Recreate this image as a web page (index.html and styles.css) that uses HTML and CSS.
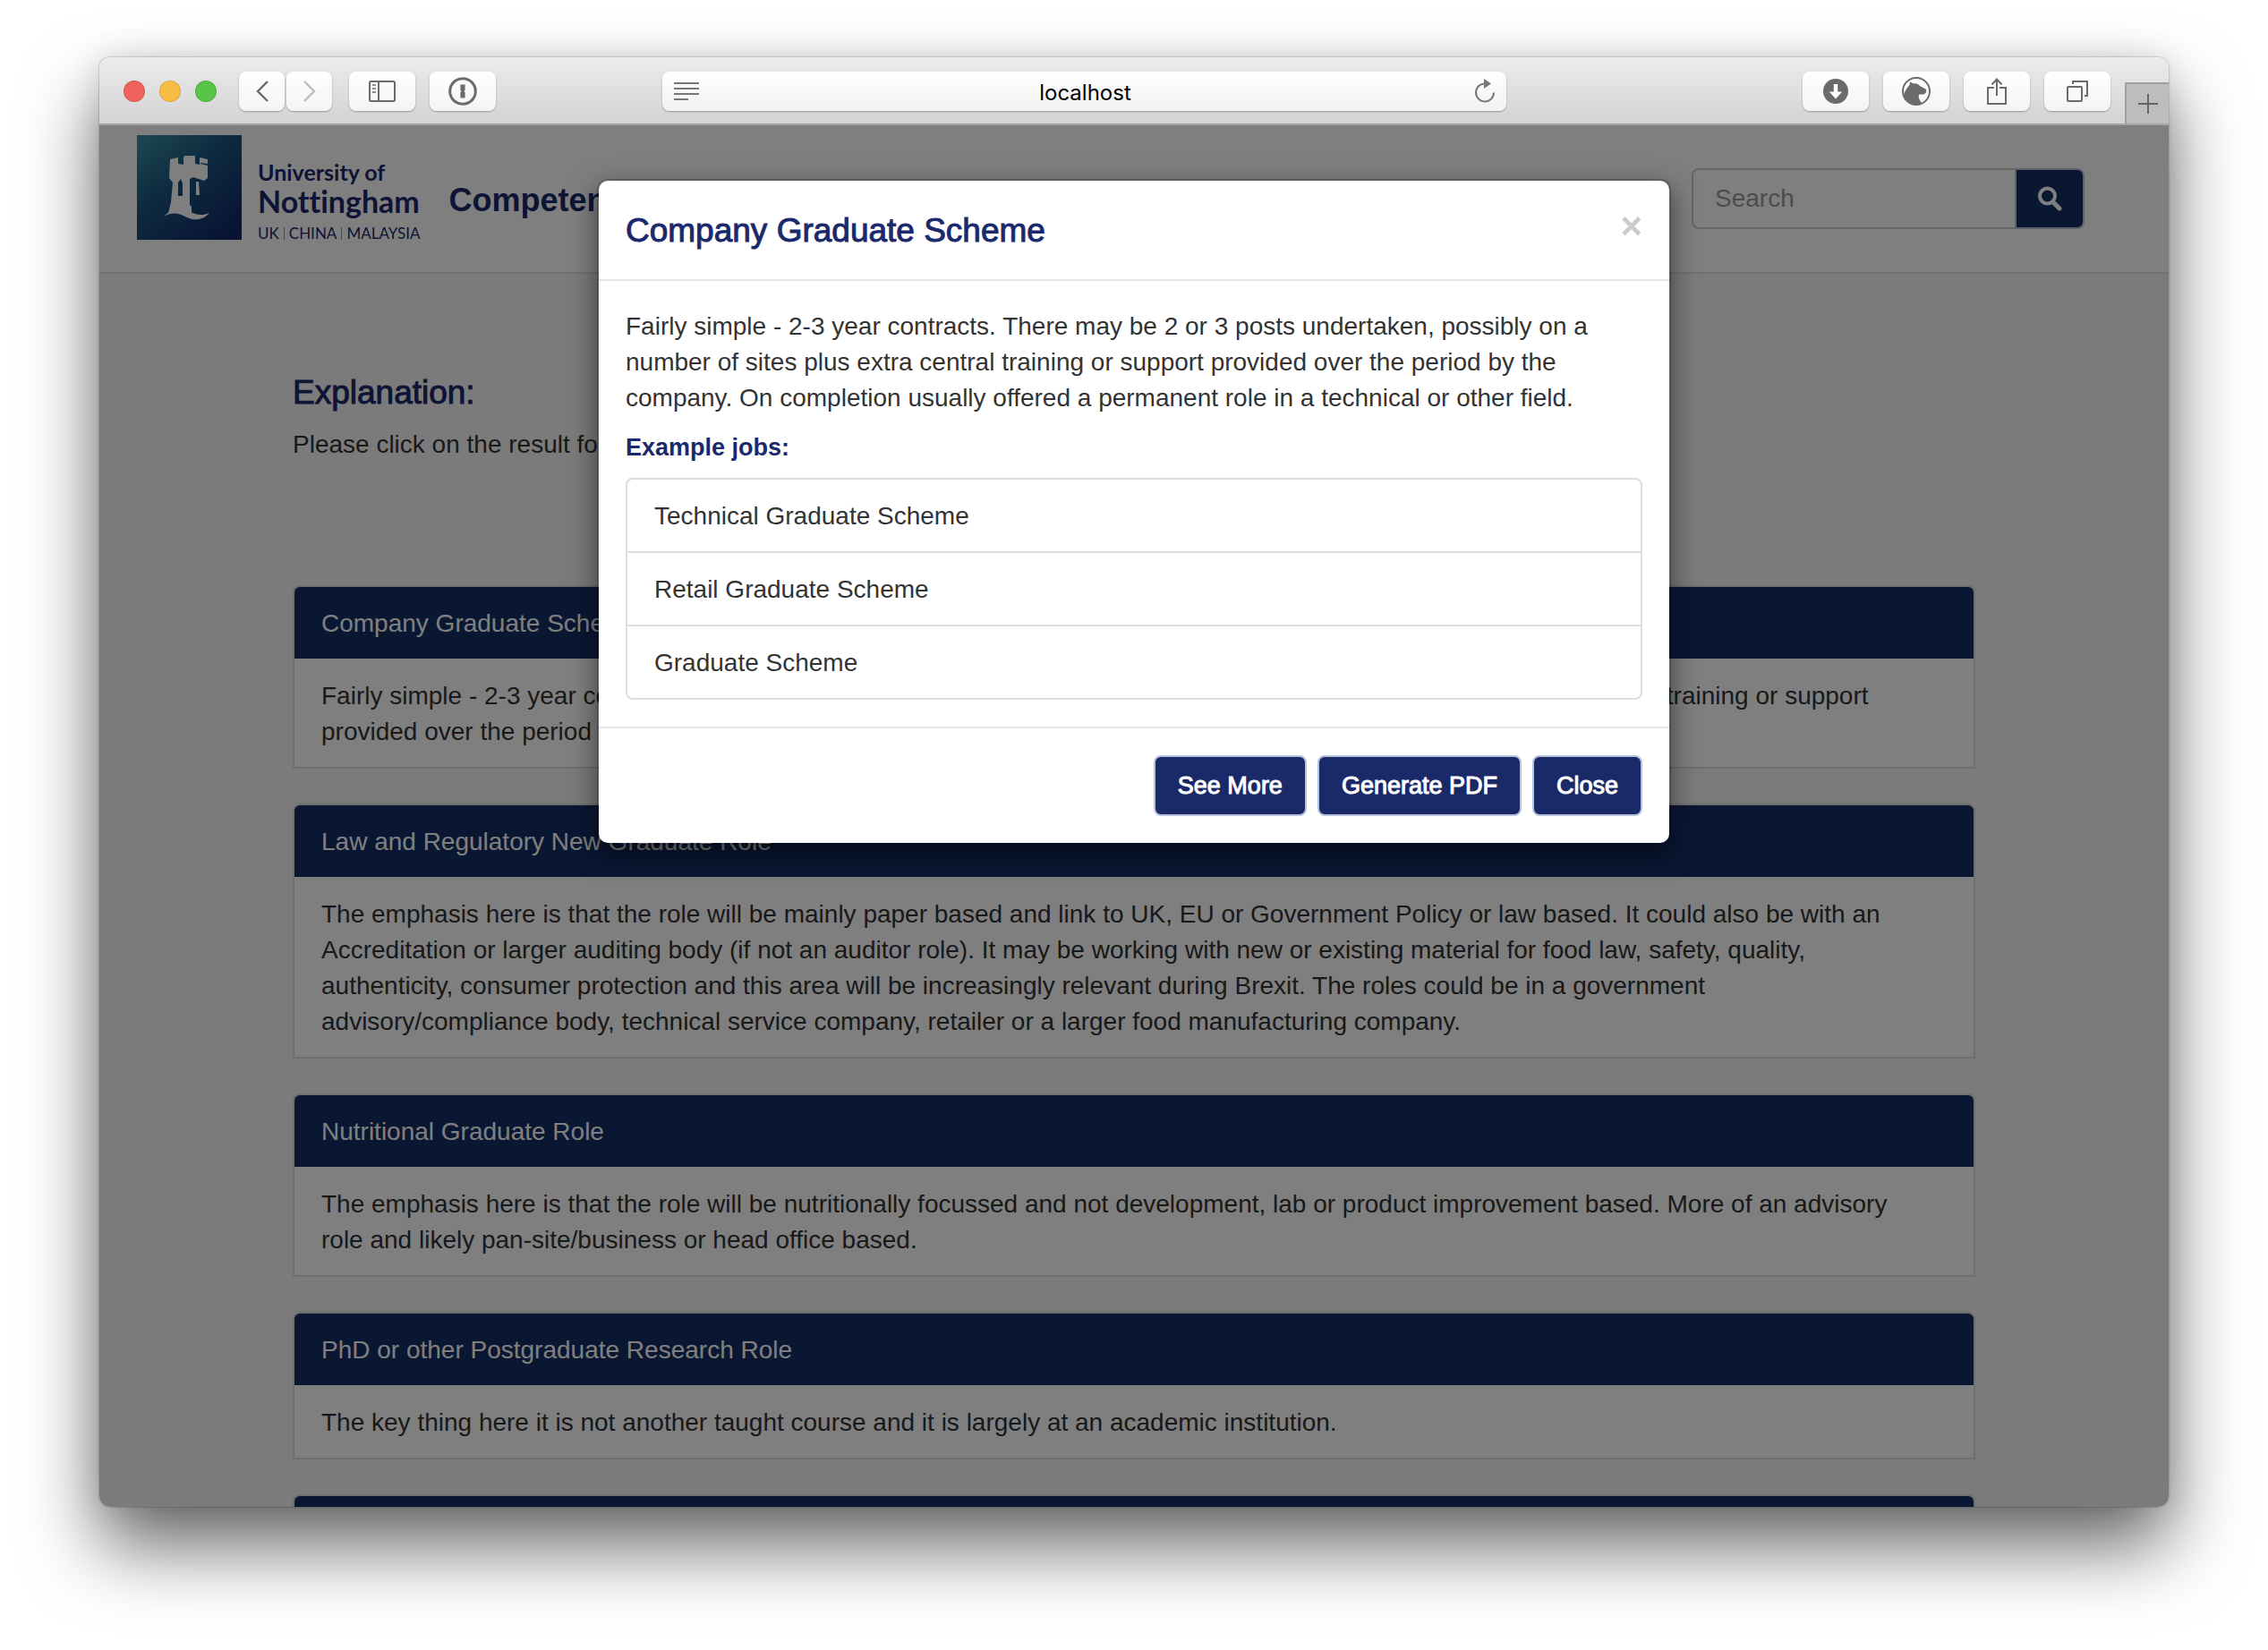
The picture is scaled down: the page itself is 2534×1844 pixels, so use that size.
FILE: index.html
```html
<!DOCTYPE html>
<html lang="en">
<head>
<meta charset="utf-8">
<title>localhost</title>
<link rel="stylesheet" href="styles.css">
</head>
<body>
<div class="window">
  <div class="toolbar">
    <div class="lights">
      <span class="light light-close"></span>
      <span class="light light-min"></span>
      <span class="light light-max"></span>
    </div>
    <div class="nav-pair">
      <button class="tool tool-narrow" aria-label="Back"><svg width="16" height="26" viewBox="0 0 16 26"><path d="M14 2 3 13l11 11" fill="none" stroke="#6b6b6b" stroke-width="2.4"/></svg></button>
      <button class="tool tool-narrow" aria-label="Forward"><svg width="16" height="26" viewBox="0 0 16 26"><path d="m2 2 11 11L2 24" fill="none" stroke="#bdbdbd" stroke-width="2.4"/></svg></button>
    </div>
    <div class="tool-group">
      <button class="tool" aria-label="Sidebar"><svg width="32" height="26" viewBox="0 0 32 26" fill="none" stroke="#6b6b6b"><rect x="2" y="2" width="28" height="22" rx="1.5" stroke-width="2"/><path d="M12 2v22" stroke-width="2"/><path d="M5 6h4M5 10h4M5 14h4" stroke-width="1.4"/></svg></button>
      <button class="tool" aria-label="Password manager"><svg width="32" height="32" viewBox="0 0 32 32"><circle cx="16" cy="16" r="14.3" fill="none" stroke="#6b6b6b" stroke-width="3"/><path d="M13.4 8.5h5.2v6.2l-1.2 1.3 1.2 1.2v6.3h-5.2v-6.2l1.2-1.3-1.2-1.2z" fill="#6b6b6b"/></svg></button>
    </div>
    <div class="address">
      <svg width="30" height="22" viewBox="0 0 30 22"><path d="M1 2h28M1 8h28M1 14h28M1 20h16" stroke="#777" stroke-width="2"/></svg>
      <input class="address-input" type="text" value="localhost" aria-label="Address">
      <button class="reload" aria-label="Reload"><svg width="24" height="28" viewBox="0 0 24 28"><path d="M13 5.5a10 10 0 1 0 9 10" fill="none" stroke="#777" stroke-width="2"/><path d="M11 0v11l8-5.5z" fill="#777"/></svg></button>
    </div>
    <div class="tool-group">
      <button class="tool" aria-label="Downloads"><svg width="28" height="28" viewBox="0 0 28 28"><circle cx="14" cy="14" r="14" fill="#6b6b6b"/><path d="M11.8 6h4.4v8.5h5L14 22.5l-7.2-8h5z" fill="#fff"/></svg></button>
      <button class="tool" aria-label="Extension"><svg width="32" height="32" viewBox="0 0 32 32"><circle cx="16" cy="16" r="15" fill="none" stroke="#6b6b6b" stroke-width="2"/><path d="M2 20c1-4 3.500-8 6.500-11L9 5.500l4 2c3-.5 5 .5 7 2.500l6.500 3.500c1 1.500 1 3 0 4.500L24 19.500h-5c-1 3 .5 6.500 3.500 10C12 34 3 28 2 20z" fill="#6b6b6b"/></svg></button>
      <button class="tool" aria-label="Share"><svg width="24" height="32" viewBox="0 0 24 32" fill="none" stroke="#6b6b6b" stroke-width="2"><path d="M9 12H2v18h20V12h-7M12 21V3M6.500 8.500 12 2.500l5.500 6"/></svg></button>
      <button class="tool" aria-label="Show tabs"><svg width="26" height="26" viewBox="0 0 26 26" fill="none" stroke="#6b6b6b" stroke-width="2"><rect x="2" y="8" width="16" height="16" rx="1"/><path d="M8 5V2h16v16h-3"/></svg></button>
    </div>
    <button class="new-tab" aria-label="New tab"><svg width="24" height="24" viewBox="0 0 24 24"><path d="M12 1v22M1 12h22" stroke="#666" stroke-width="2"/></svg></button>
  </div>

  <div class="viewport">
    <header class="site-header">
      <a class="brand" href="#">
        <svg class="crest" width="117" height="117" viewBox="0 0 117 117">
          <defs>
            <linearGradient id="crest-fill" x1="0" y1="0" x2="0.8" y2="1">
              <stop offset="0" stop-color="#3a93a3"/>
              <stop offset="0.45" stop-color="#1b557f"/>
              <stop offset="1" stop-color="#12286a"/>
            </linearGradient>
          </defs>
          <rect width="117" height="117" fill="url(#crest-fill)"/>
          <path fill="#fff" d="M37 27l9-2v7l6 1v-8l1-2 12 0v9l5 1v-8l9 2v5l-8-1v1l8 2v14l-4 3-12-4-4 2v29l2 2v8c-8-1-16-5-26-1l3-12 2-22-4-5z"/>
          <path fill="#174a7c" d="M46 53l3-4 2 5v14h-5z"/>
          <path fill="#fff" d="M66 52h3l1 15h-4z"/>
          <path fill="#fff" d="M30 91c12-14 26-7 35-3 6 2 11 1 16-1-7 8-16 9-25 5-8-4-16-7-26-1z"/>
        </svg>
        <span class="brand-text">
          <span class="brand-small">University of</span>
          <span class="brand-large">Nottingham</span>
          <span class="brand-places">UK <i></i> CHINA <i></i> MALAYSIA</span>
        </span>
      </a>
      <span class="site-title">Competencies</span>
      <form class="search">
        <input class="search-input" type="text" placeholder="Search" aria-label="Search">
        <button class="search-button" type="button" aria-label="Submit search"><svg width="28" height="28" viewBox="0 0 28 28" fill="none" stroke="#fff"><circle cx="11.500" cy="11" r="8.500" stroke-width="4"/><path d="m18 18 7 7" stroke-width="5" stroke-linecap="round"/></svg></button>
      </form>
    </header>

    <main class="content">
      <h3 class="heading">Explanation:</h3>
      <p class="intro">Please click on the result for</p>

      <section class="panel">
        <h4 class="panel-heading">Company Graduate Scheme</h4>
        <p class="panel-body">Fairly simple - 2-3 year contracts. There may be 2 or 3 posts undertaken, possibly on a number of sites plus extra central training or support provided over the period by the company. On completion usually offered a permanent role in a technical or other field.</p>
      </section>
      <section class="panel">
        <h4 class="panel-heading">Law and Regulatory New Graduate Role</h4>
        <p class="panel-body">The emphasis here is that the role will be mainly paper based and link to UK, EU or Government Policy or law based. It could also be with an Accreditation or larger auditing body (if not an auditor role). It may be working with new or existing material for food law, safety, quality, authenticity, consumer protection and this area will be increasingly relevant during Brexit. The roles could be in a government <span class="keep">advisory/compliance</span> body, technical service company, retailer or a larger food manufacturing company.</p>
      </section>
      <section class="panel">
        <h4 class="panel-heading">Nutritional Graduate Role</h4>
        <p class="panel-body">The emphasis here is that the role will be nutritionally focussed and not development, lab or product improvement based. More of an advisory role and likely pan-site/business or head office based.</p>
      </section>
      <section class="panel">
        <h4 class="panel-heading">PhD or other Postgraduate Research Role</h4>
        <p class="panel-body">The key thing here it is not another taught course and it is largely at an academic institution.</p>
      </section>
      <section class="panel">
        <h4 class="panel-heading"></h4>
      </section>
    </main>

    <div class="backdrop">
      <div class="modal" role="dialog" aria-labelledby="modal-title">
        <div class="modal-header">
          <h4 class="heading" id="modal-title">Company Graduate Scheme</h4>
          <button class="modal-close" aria-label="Close">×</button>
        </div>
        <div class="modal-body">
          <p class="modal-text">Fairly simple - 2-3 year contracts. There may be 2 or 3 posts undertaken, possibly on a number of sites plus extra central training or support provided over the period by the company. On completion usually offered a permanent role in a technical or other field.</p>
          <h5 class="modal-subtitle">Example jobs:</h5>
          <ul class="jobs">
            <li>Technical Graduate Scheme</li>
            <li>Retail Graduate Scheme</li>
            <li>Graduate Scheme</li>
          </ul>
        </div>
        <div class="modal-footer">
          <button class="action">See More</button>
          <button class="action">Generate PDF</button>
          <button class="action">Close</button>
        </div>
      </div>
    </div>
  </div>
</div>
</body>
</html>
```
FILE: styles.css
```css
* { box-sizing: border-box; }

body {
  margin: 0;
  height: 100vh;
  padding: 64px 111px 160px;
  overflow: hidden;
  background: #fff;
  color: #333;
  font: 28px/40px "Liberation Sans", Arial, sans-serif;
}

h3, h4, h5, p, ul { margin: 0; padding: 0; font-size: inherit; font-weight: 400; }
button, input { font: inherit; margin: 0; }
svg { display: block; flex: none; }

/* Browser window */
.window {
  display: flex;
  flex-direction: column;
  height: 100%;
  border-radius: 12px;
  box-shadow: 0 0 2px rgba(0, 0, 0, .45), 0 44px 84px rgba(0, 0, 0, .6), 0 0 36px rgba(0, 0, 0, .1);
}

.toolbar {
  display: flex;
  align-items: center;
  flex: none;
  height: 76px;
  padding: 2px 0 0 27px;
  border-bottom: 2px solid #a5a5a5;
  border-radius: 12px 12px 0 0;
  background: linear-gradient(#ececec, #d3d3d3);
}

.lights { display: flex; gap: 16px; margin-right: 25px; }
.light { width: 24px; height: 24px; border-radius: 50%; border: 1px solid rgba(0, 0, 0, .12); }
.light-close { background: #f0625c; }
.light-min { background: #f8bd45; }
.light-max { background: #58c548; }

.nav-pair { display: flex; gap: 2px; margin-right: 19px; }
.tool-group { display: flex; gap: 16px; }

.tool {
  display: flex;
  align-items: center;
  justify-content: center;
  width: 74px;
  height: 44px;
  padding: 0;
  border: 0;
  border-radius: 8px;
  background: linear-gradient(#fff, #f4f4f4);
  box-shadow: 0 1px 2px rgba(0, 0, 0, .3);
}
.tool-narrow { width: 51px; }

.address {
  display: flex;
  align-items: center;
  flex: 1;
  height: 44px;
  margin: 0 331px 0 186px;
  padding: 0 12px;
  border-radius: 8px;
  background: linear-gradient(#fff, #f1f1f1);
  box-shadow: 0 1px 2px rgba(0, 0, 0, .3);
}
.address-input {
  flex: 1;
  min-width: 0;
  padding: 4px 4px 0 0;
  border: 0;
  background: none;
  color: #000;
  font-family: Inter, sans-serif;
  font-size: 24px;
  line-height: 32px;
  text-align: center;
}
.reload { border: 0; padding: 0; background: none; }

.new-tab {
  display: flex;
  align-items: center;
  justify-content: center;
  align-self: flex-end;
  width: 49px;
  height: 46px;
  margin-left: 16px;
  padding: 0;
  border: solid #a0a0a0;
  border-width: 2px 0 0 2px;
  background: #bdbdbd;
}

/* Page */
.viewport {
  position: relative;
  flex: 1;
  min-height: 0;
  overflow: hidden;
  border-radius: 0 0 12px 12px;
  background: #f7f7f7;
}

.site-header {
  display: flex;
  align-items: center;
  height: 166px;
  padding: 0 94px 0 42px;
  border-bottom: 2px solid #e2e2e2;
  background: #fff;
}

.brand { display: flex; align-items: flex-start; gap: 18px; margin-bottom: 14px; color: #1a296b; text-decoration: none; }
.brand-text { display: flex; flex-direction: column; padding-top: 26px; font-family: Lato, sans-serif; font-variant-ligatures: none; }
.brand-small { font-size: 25px; font-weight: 700; line-height: 30px; }
.brand-large { font-size: 34px; font-weight: 700; line-height: 36px; }
.brand-places { display: flex; align-items: center; gap: 5px; font-size: 17px; line-height: 36px; }
.brand-places i { width: 1px; height: 14px; background: #8a90ad; }

.site-title { margin-left: 32px; padding-top: 4px; color: #1a296b; font-size: 36px; font-weight: 700; }

.search { display: flex; margin-left: auto; }
.search-input {
  width: 361px;
  height: 68px;
  padding: 12px 24px;
  border: 2px solid #ccc;
  border-right: 0;
  border-radius: 8px 0 0 8px;
  background: #fff;
}
.search-input::placeholder { color: #999; opacity: 1; }
.search-button {
  display: flex;
  align-items: center;
  justify-content: center;
  width: 78px;
  height: 68px;
  padding: 0;
  border: 2px solid #b9c4dc;
  border-radius: 0 8px 8px 0;
  background: #142f66;
}

.content { padding: 113px 216px 0; }

.heading {
  color: #1a296b;
  font-size: 37px;
  line-height: 40px;
  -webkit-text-stroke: 1px #1a296b;
}

.intro { margin: 18px 0 137px; }

.panel {
  margin-bottom: 39px;
  border: 2px solid #ddd;
  border-radius: 8px 8px 0 0;
  background: #fff;
}
.panel-heading {
  min-height: 80px;
  padding: 21px 30px 19px;
  border-radius: 6px 6px 0 0;
  background: #142f66;
  color: #fff;
}
.panel-body { padding: 22px 60px 19px 30px; }
.keep { white-space: nowrap; }

/* Dialog */
.backdrop {
  position: absolute;
  inset: 0;
  padding-top: 60px;
  background: rgba(0, 0, 0, .5);
}
.modal {
  width: 1200px;
  max-width: 100%;
  margin: 0 auto;
  border: 2px solid rgba(0, 0, 0, .2);
  border-radius: 12px;
  background: #fff;
  background-clip: padding-box;
  box-shadow: 0 10px 30px rgba(0, 0, 0, .5);
}
.modal-header {
  display: flex;
  align-items: center;
  justify-content: space-between;
  height: 112px;
  padding: 2px 30px 0;
  border-bottom: 2px solid #e5e5e5;
}
.modal-close {
  padding: 0;
  margin-bottom: 10px;
  border: 0;
  background: none;
  color: #ccc;
  font-size: 42px;
  font-weight: 700;
  line-height: 42px;
}
.modal-body { padding: 31px 30px 30px; }
.modal-text { margin-bottom: 20px; }
.modal-subtitle {
  margin-bottom: 18px;
  color: #1a296b;
  font-size: 27px;
  font-weight: 700;
  line-height: 31px;
}
.jobs {
  list-style: none;
  border: 2px solid #ddd;
  border-radius: 8px;
}
.jobs li { padding: 21px 30px 19px; }
.jobs li + li { border-top: 2px solid #ddd; }

.modal-footer {
  display: flex;
  justify-content: flex-end;
  gap: 12px;
  padding: 30px;
  border-top: 2px solid #e5e5e5;
}
.action {
  height: 68px;
  padding: 0 25px;
  border: 2px solid #b9c4dc;
  border-radius: 8px;
  background: #1a2a68;
  color: #fff;
  font-size: 27px;
  line-height: 40px;
  -webkit-text-stroke: 1px #fff;
}
```
